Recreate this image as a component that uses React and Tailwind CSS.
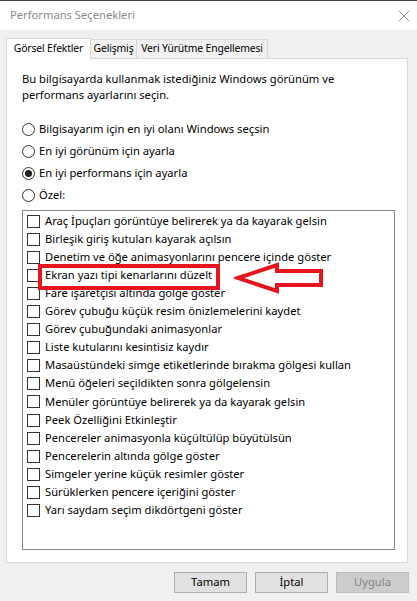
import React from "react";

const items = [
  "Araç İpuçları görüntüye belirerek ya da kayarak gelsin",
  "Birleşik giriş kutuları kayarak açılsın",
  "Denetim ve öğe animasyonlarını pencere içinde göster",
  "Ekran yazı tipi kenarlarını düzelt",
  "Fare işaretçisi altında gölge göster",
  "Görev çubuğu küçük resim önizlemelerini kaydet",
  "Görev çubuğundaki animasyonlar",
  "Liste kutularını kesintisiz kaydır",
  "Masaüstündeki simge etiketlerinde bırakma gölgesi kullan",
  "Menü öğeleri seçildikten sonra gölgelensin",
  "Menüler görüntüye belirerek ya da kayarak gelsin",
  "Peek Özelliğini Etkinleştir",
  "Pencereler animasyonla küçültülüp büyütülsün",
  "Pencerelerin altında gölge göster",
  "Simgeler yerine küçük resimler göster",
  "Sürüklerken pencere içeriğini göster",
  "Yarı saydam seçim dikdörtgeni göster",
];

const radios = [
  { label: "Bilgisayarım için en iyi olanı Windows seçsin", on: false },
  { label: "En iyi görünüm için ayarla", on: false },
  { label: "En iyi performans için ayarla", on: true },
  { label: "Özel:", on: false },
];

function Radio({ label, on }) {
  return (
    <div className="flex items-center h-[22px]">
      <span className="w-[13px] h-[13px] rounded-full border border-[#333] bg-white flex items-center justify-center">
        {on && <span className="w-[7px] h-[7px] rounded-full bg-[#222]" />}
      </span>
      <span className="ml-[4px]">{label}</span>
    </div>
  );
}

export default function App() {
  return (
    <div
      className="w-[417px] h-[601px] bg-[#f0f0f0] text-[11.2px] text-black overflow-hidden"
      style={{ fontFamily: '"Segoe UI", "Noto Sans", sans-serif' }}
    >
      {/* title bar */}
      <div className="h-[30px] bg-white flex items-center justify-between pl-[10px] pr-[7px] border-t border-[#444]">
        <span className="text-[#8a8a8a]">Performans Seçenekleri</span>
        <svg width="12" height="12" viewBox="0 0 12 12">
          <path d="M1 1 L11 11 M11 1 L1 11" stroke="#8a8a8a" strokeWidth="1" />
        </svg>
      </div>

      <div className="pl-[6px] pr-[9px] pt-[7px]">
        {/* tabs */}
        <div className="flex items-end h-[21px] text-[10.4px] tracking-[-0.15px] whitespace-nowrap">
          <div className="w-[85px] h-[21px] bg-white border border-b-0 border-[#d9d9d9] flex items-center justify-center relative z-10 -mb-px">
            Görsel Efektler
          </div>
          <div className="w-[46px] h-[19px] border border-l-0 border-b-0 border-[#d9d9d9] flex items-center justify-center">
            Gelişmiş
          </div>
          <div className="w-[131px] h-[19px] border border-l-0 border-b-0 border-[#d9d9d9] flex items-center justify-center">
            Veri Yürütme Engellemesi
          </div>
        </div>

        {/* panel */}
        <div className="h-[505px] bg-white border border-[#d9d9d9] pl-[15px] pr-[12px] pt-[12px]">
          <p className="leading-[16px]">
            Bu bilgisayarda kullanmak istediğiniz Windows görünüm ve
            <br />
            performans ayarlarını seçin.
          </p>

          <div className="mt-[15px]">
            {radios.map(r => (
              <Radio key={r.label} label={r.label} on={r.on} />
            ))}
          </div>

          <div className="relative mt-[4px] h-[340px] border border-[#828790] pt-[1px] pl-[4px]">
            {items.map(t => (
              <div key={t} className="flex items-center h-[18.1px]">
                <span className="w-[13px] h-[13px] border border-[#333] bg-white" />
                <span className="ml-[5px] whitespace-nowrap">{t}</span>
              </div>
            ))}

            {/* red highlight box */}
            <div className="absolute left-[15px] top-[53px] w-[182px] h-[26px] border-[4px] border-[#e8141c]" />

            {/* red arrow */}
            <svg
              className="absolute left-[211px] top-[50px]"
              width="92"
              height="34"
              viewBox="0 0 92 34"
            >
              <polygon
                points="4,17 43,4 43,10 87,10 87,24 43,24 43,30"
                fill="white"
                stroke="#e8141c"
                strokeWidth="4"
                strokeLinejoin="miter"
              />
            </svg>
          </div>
        </div>

        {/* buttons */}
        <div className="flex justify-end gap-[8px] mt-[9px] mr-[-1px]">
          <button className="w-[73px] h-[21px] bg-[#e1e1e1] border border-[#adadad]">Tamam</button>
          <button className="w-[73px] h-[21px] bg-[#e1e1e1] border border-[#adadad]">İptal</button>
          <button className="w-[73px] h-[21px] bg-[#cccccc] border border-[#bfbfbf] text-[#838383]">Uygula</button>
        </div>
      </div>
    </div>
  );
}
